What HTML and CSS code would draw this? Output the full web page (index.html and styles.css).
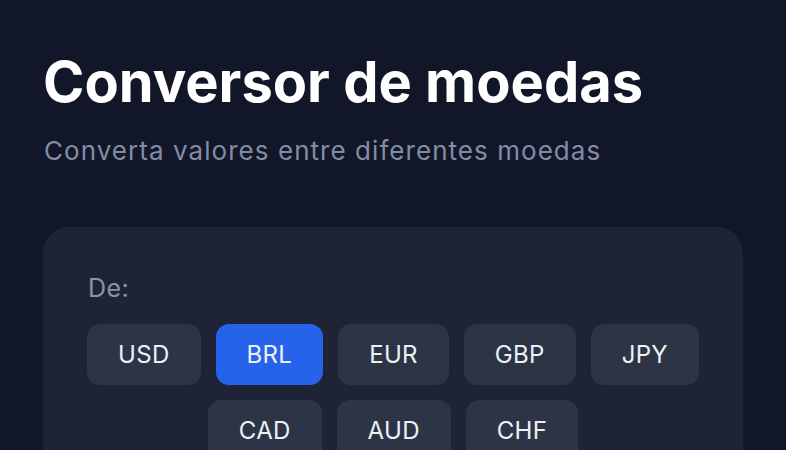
FILE: index.html
```html
<!DOCTYPE html>
<html lang="pt">
<head>
<meta charset="utf-8">
<title>Conversor de moedas</title>
<link rel="stylesheet" href="styles.css">
</head>
<body>
<main class="page">
  <h1 class="title">Conversor de moedas</h1>
  <p class="subtitle">Converta valores entre diferentes moedas</p>
  <section class="card">
    <div class="label">De:</div>
    <div class="currencies">
      <button class="cur">USD</button>
      <button class="cur active">BRL</button>
      <button class="cur">EUR</button>
      <button class="cur">GBP</button>
      <button class="cur">JPY</button>
      <button class="cur">CAD</button>
      <button class="cur">AUD</button>
      <button class="cur">CHF</button>
    </div>
  </section>
</main>
</body>
</html>
```

FILE: styles.css
```css
html, body {
  margin: 0;
  padding: 0;
  background: #121629;
  height: 100%;
  overflow: hidden;
}
body {
  font-family: Inter, "Noto Sans", sans-serif;
  color: #ffffff;
}
.page {
  padding: 48px 43px 0 43px;
  width: 700px;
}
.title {
  margin: 0;
  font-size: 56px;
  font-weight: 700;
  line-height: 68px;
  letter-spacing: 0;
  color: #ffffff;
}
.subtitle {
  margin: 18px 0 0 1px;
  font-size: 26px;
  line-height: 34px;
  letter-spacing: 1.05px;
  color: #838ca3;
}
.card {
  margin-top: 59px;
  background: #1e2435;
  border-radius: 26px;
  padding: 46px 38px 40px 38px;
}
.label {
  margin-left: 7px;
  font-size: 25px;
  line-height: 30px;
  letter-spacing: 0.5px;
  color: #8a93a8;
}
.currencies {
  margin-top: 21px;
  display: flex;
  flex-wrap: wrap;
  justify-content: center;
  gap: 15px 15px;
}
.cur {
  font-family: Inter, "Noto Sans", sans-serif;
  font-size: 24px;
  letter-spacing: 0.3px;
  color: #eef0f5;
  background: #2d3446;
  border: none;
  border-radius: 13px;
  height: 61px;
  padding: 0 31px;
}
.cur.active {
  background: #2563eb;
}
```
